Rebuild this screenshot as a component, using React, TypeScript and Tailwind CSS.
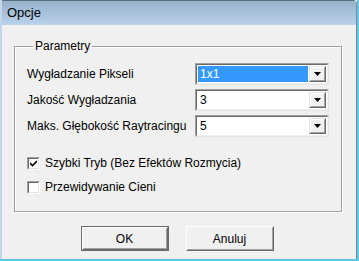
import React from "react";

function Arrow() {
  return (
    <div className="w-[17px] h-full bg-[#f0f0f0] border border-t-[#e3e3e3] border-l-[#e3e3e3] border-b-[#696969] border-r-[#696969]">
      <div className="w-full h-full border border-t-white border-l-white border-b-[#a0a0a0] border-r-[#a0a0a0] flex items-center justify-center">
        <svg width="7" height="4" viewBox="0 0 7 4">
          <polygon points="0,0 7,0 3.5,4" fill="#000" />
        </svg>
      </div>
    </div>
  );
}

function Combo({ value, selected }: { value: string; selected?: boolean }) {
  return (
    <div className="w-[134px] h-[22px] border border-t-[#a0a0a0] border-l-[#a0a0a0] border-b-[#e3e3e3] border-r-[#e3e3e3]">
      <div className="w-full h-full border border-t-[#696969] border-l-[#696969] border-b-[#f0f0f0] border-r-[#f0f0f0] bg-white flex p-[1px]">
        <div className={"flex-1 flex items-center pl-[2px] mr-[1px] " + (selected ? "bg-[#3399ff] text-white" : "text-black")}>
          {value}
        </div>
        <Arrow />
      </div>
    </div>
  );
}

function Check({ checked, label }: { checked?: boolean; label: string }) {
  return (
    <div className="flex items-center h-[16px] gap-[5px]">
      <div className="w-[13px] h-[13px] border border-t-[#a0a0a0] border-l-[#a0a0a0] border-b-white border-r-white">
        <div className="w-full h-full border border-t-[#696969] border-l-[#696969] border-b-[#e3e3e3] border-r-[#e3e3e3] bg-white flex items-center justify-center">
          {checked && (
            <svg width="7" height="7" viewBox="0 0 7 7">
              <path d="M0 3 L2.5 5.5 L7 1" stroke="#000" strokeWidth="1.6" fill="none" />
            </svg>
          )}
        </div>
      </div>
      <span>{label}</span>
    </div>
  );
}

function Button({ label, def }: { label: string; def?: boolean }) {
  return (
    <div className={"w-[88px] h-[25px] " + (def ? "border border-[#696969]" : "")}>
      <div className="w-full h-full bg-[#f0f0f0] border border-t-white border-l-white border-b-[#696969] border-r-[#696969]">
        <div className="w-full h-full border border-t-[#f0f0f0] border-l-[#f0f0f0] border-b-[#a0a0a0] border-r-[#a0a0a0] flex items-center justify-center">
          {label}
        </div>
      </div>
    </div>
  );
}

export default function App() {
  return (
    <div
      className="w-[359px] h-[261px] flex flex-col text-[12px] text-black bg-[#f0f0f0] border-b-[2px] border-b-[#5ac8ea] border-r-[2px] border-r-[#5ac8ea]"
      style={{ fontFamily: '"Liberation Sans", Arial, sans-serif' }}
    >
      <div className="flex-1 flex flex-col border-l-[2px] border-l-[#c3d5e9] border-r border-r-[#8a8a8a] rounded-tr-[4px] overflow-hidden">
        <div className="h-[25px] border-t border-t-[#5a6b7c] bg-gradient-to-b from-[#97b0cb] to-[#bad2eb] flex items-center pl-[5px] text-[13px]">
          Opcje
        </div>
        <div className="flex-1 flex flex-col">
          <fieldset className="mt-[14px] ml-[12px] w-[328px] h-[173px] border border-[#a0a0a0] shadow-[inset_1px_1px_0_#ffffff,1px_1px_0_#ffffff] px-[12px] pt-[10px] box-border">
            <legend className="ml-[6px] px-[2px] leading-[14px]">Parametry</legend>
            <div className="flex flex-col gap-[4px]">
              <div className="flex items-center justify-between">
                <span>Wygładzanie Pikseli</span>
                <Combo value="1x1" selected />
              </div>
              <div className="flex items-center justify-between">
                <span>Jakość Wygładzania</span>
                <Combo value="3" />
              </div>
              <div className="flex items-center justify-between">
                <span>Maks. Głębokość Raytracingu</span>
                <Combo value="5" />
              </div>
            </div>
            <div className="flex flex-col gap-[8px] mt-[18px]">
              <Check checked label="Szybki Tryb (Bez Efektów Rozmycia)" />
              <Check label="Przewidywanie Cieni" />
            </div>
          </fieldset>
          <div className="flex justify-center gap-[17px] mt-[14px] pr-[4px]">
            <Button label="OK" def />
            <Button label="Anuluj" />
          </div>
        </div>
      </div>
    </div>
  );
}
